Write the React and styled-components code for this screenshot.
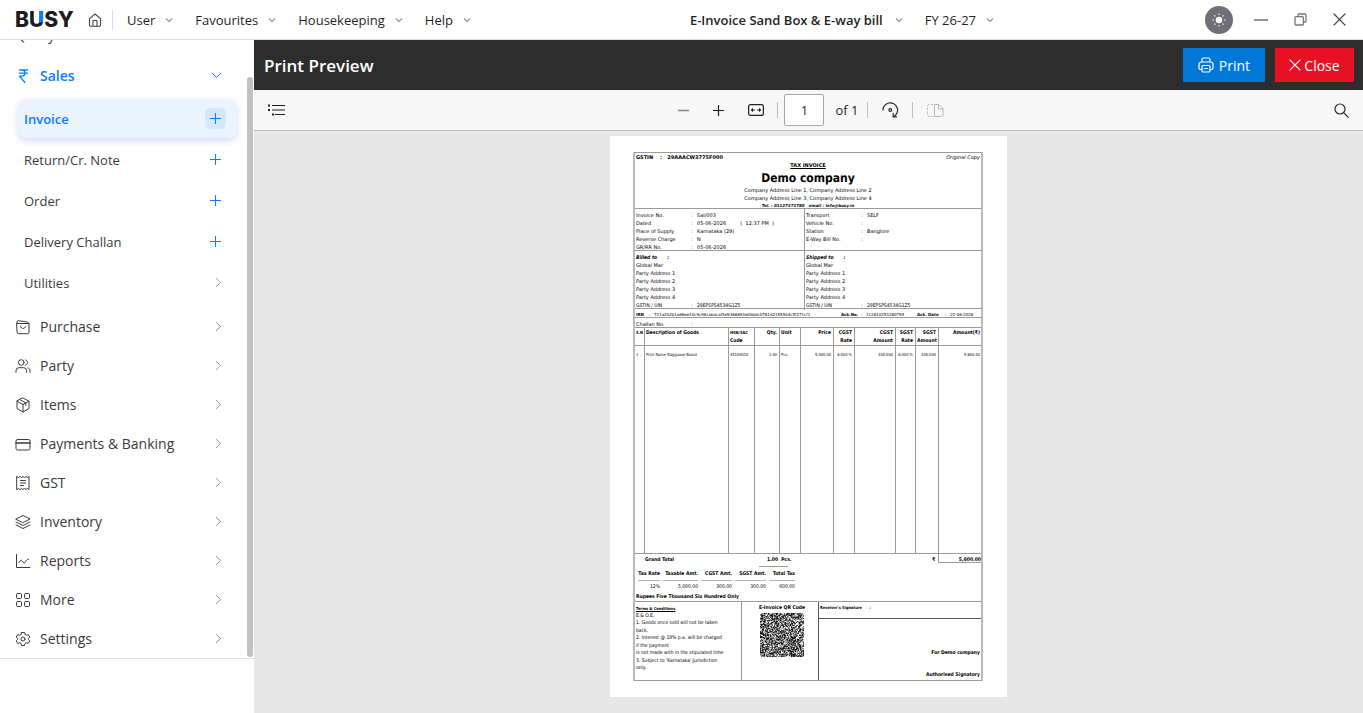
import React from 'react';
import styled, { createGlobalStyle, css } from 'styled-components';

const GlobalStyle = createGlobalStyle`
  * {
    box-sizing: border-box;
  }

  body {
    margin: 0;
    font-family: "Open Sans", "Noto Sans", sans-serif;
    color: #1f1f1f;
    background: #ffffff;
  }

  button, input {
    font-family: inherit;
    color: inherit;
  }
`;

const Page = styled.div`
  min-height: 100vh;
  display: flex;
  flex-direction: column;
`;

const plainButton = css`
  display: flex;
  align-items: center;
  padding: 0;
  border: 0;
  background: none;
  cursor: pointer;
`;

/* Top bar */

const TopBar = styled.header`
  height: 40px;
  flex: none;
  display: flex;
  align-items: center;
  justify-content: space-between;
  padding: 0 17px 0 15px;
  border-bottom: 1px solid #dddddd;
`;

const TopGroup = styled.div`
  display: flex;
  align-items: center;
`;

const Logo = styled.a`
  width: 60px;
  margin-right: 13px;
  font-family: Inter, sans-serif;
  font-size: 21px;
  font-weight: 800;
  line-height: 24px;
  color: #1c1c1e;
  text-decoration: none;
`;

const LogoAccent = styled.span`
  color: transparent;
  background: linear-gradient(#0a7cff, #0a7cff) right top / 42% 62% no-repeat, #1c1c1e;
  background-clip: text;
  -webkit-background-clip: text;
`;

const HomeButton = styled.button`
  ${plainButton}
  padding-right: 10px;
  margin-right: 14px;
  height: 20px;
  border-right: 1px solid #dcdce0;
`;

const Menu = styled.nav`
  display: flex;
  gap: 22px;
`;

const MenuButton = styled.button`
  ${plainButton}
  gap: ${({ $strong }) => ($strong ? '12px' : '10px')};
  font-size: 13px;
  line-height: 20px;
  font-weight: ${({ $strong }) => ($strong ? 600 : 400)};
  white-space: nowrap;
`;

const CompanyMenu = styled(Menu)`
  padding-left: 8px;
`;

const WindowControls = styled.div`
  display: flex;
  align-items: center;
  gap: 26px;
`;

const IconButton = styled.button`
  ${plainButton}
`;

const ThemeButton = styled.button`
  ${plainButton}
  justify-content: center;
  width: 28px;
  height: 28px;
  border-radius: 14px;
  background: #6f6f77;
  margin-right: -5px;
`;

/* Sidebar */

const Body = styled.div`
  flex: 1;
  display: flex;
  min-height: 0;
`;

const Sidebar = styled.aside`
  width: 254px;
  flex: none;
  display: flex;
  flex-direction: column;
`;

const SidebarScroll = styled.div`
  flex: 1 1 0;
  min-height: 0;
  display: flex;
  border-bottom: 1px solid #e0e0e0;
`;

const SidebarList = styled.div`
  flex: 1;
  display: flex;
  flex-direction: column;
  justify-content: flex-end;
  overflow: hidden;
`;

const ScrollTrack = styled.div`
  width: 7px;
  display: flex;
  flex-direction: column;
  justify-content: flex-end;
  padding: 0 1px 1px 0;
`;

const ScrollThumb = styled.div`
  height: 94%;
  border-radius: 3px;
  background: #c1c1c1;
`;

const SidebarFooter = styled.div`
  height: 54px;
  flex: none;
`;

const NavItem = styled.a`
  flex: none;
  display: flex;
  align-items: center;
  gap: 9px;
  height: 39px;
  padding: 0 25px 0 15px;
  font-size: 14px;
  font-weight: ${({ $active }) => ($active ? 600 : 400)};
  color: ${({ $active }) => ($active ? '#0a7cff' : '#3a3a3a')};
  text-decoration: none;
`;

const SearchItem = styled(NavItem)`
  padding-bottom: 5px;
`;

const NavLabel = styled.span`
  flex: 1;
  white-space: nowrap;
`;

const SubList = styled.div`
  flex: none;
  padding: 4px 10px 3px 18px;
`;

const SubRow = styled.div`
  display: flex;
  align-items: center;
  height: 39px;
  margin-bottom: 2px;
  padding: 0 11px 0 6px;
  border-radius: 8px;

  ${({ $selected }) => $selected && css`
    background: #ebf3ff;
    box-shadow: 0 3px 6px #d3dafc;
  `}
`;

const SubLink = styled.a`
  flex: 1;
  font-size: 13px;
  font-weight: ${({ $selected }) => ($selected ? 600 : 400)};
  color: ${({ $selected }) => ($selected ? '#0a7cff' : '#3a3a3a')};
  text-decoration: none;
`;

const AddButton = styled.button`
  ${plainButton}
  justify-content: center;
  width: 21px;
  height: 21px;
  border-radius: 5px;
  background: ${({ $selected }) => ($selected ? '#d3e7fd' : 'none')};
`;

const SubChevron = styled.span`
  display: flex;
  padding-right: 4px;
`;

/* Preview pane */

const Preview = styled.main`
  flex: 1;
  min-width: 0;
  display: flex;
  flex-direction: column;
  background: #e6e6e6;
`;

const PreviewHeader = styled.div`
  display: flex;
  align-items: center;
  gap: 10px;
  height: 50px;
  padding: 0 9px 0 10px;
  background: #2d2d2d;
  color: #ffffff;
`;

const PreviewTitle = styled.h1`
  flex: 1;
  margin: 0;
  font-size: 17px;
  font-weight: 600;
`;

const ActionButton = styled.button`
  ${plainButton}
  justify-content: center;
  gap: ${({ $danger }) => ($danger ? '3px' : '5px')};
  width: ${({ $danger }) => ($danger ? '79px' : '82px')};
  height: 34px;
  font-size: 14px;
  background: ${({ $danger }) => ($danger ? '#e81123' : '#0078d7')};
`;

const Toolbar = styled.div`
  display: grid;
  grid-template-columns: 1fr auto 1fr;
  align-items: center;
  height: 41px;
  padding: 0 14px;
  background: #f7f7f7;
  border-bottom: 1px solid #bdbdbd;
`;

const ToolGroup = styled.div`
  display: flex;
  align-items: center;
  justify-content: ${({ $end }) => ($end ? 'flex-end' : 'flex-start')};
`;

const PageTools = styled(ToolGroup)`
  padding-left: 5px;
`;

const ZoomTools = styled(ToolGroup)`
  gap: 24px;
`;

const Separator = styled.span`
  width: 1px;
  height: 16px;
  margin: 0 ${({ $wide }) => ($wide ? '14px' : '6px')} 0 ${({ $tight }) => ($tight ? '8px' : '13px')};
  background: #bdbdbd;
`;

const PageInput = styled.input`
  width: 40px;
  height: 32px;
  padding: 0;
  border: 1px solid #a8a8a8;
  border-radius: 2px;
  background: #ffffff;
  font-size: 13px;
  text-align: center;
`;

const PageCount = styled.label`
  margin-left: 11px;
  font-size: 13px;
`;

const Canvas = styled.div`
  flex: 1;
  display: flex;
  justify-content: center;
  align-items: flex-start;
  padding: 5px 0 16px;
`;

/* Invoice sheet */

const LINE = '#9a9a9a';
const WIDE_FONT = '"DejaVu Sans", sans-serif';

const Sheet = styled.article`
  width: 397px;
  padding: 16px 24px 16px 23px;
  background: #ffffff;
  color: #000000;
  font-family: "DejaVu Sans Condensed", "DejaVu Sans", sans-serif;
  font-size: 5px;
  line-height: 8px;
  text-rendering: geometricPrecision;
`;

const Frame = styled.div`
  border: 1px solid ${LINE};
  border-left: 2px solid #bababa;
  border-right: 2px solid #bababa;
`;

const Head = styled.div`
  height: 56px;
  padding-top: 1px;
  border-bottom: 1px solid ${LINE};
  font-family: ${WIDE_FONT};
  text-align: center;
`;

const HeadRow = styled.div`
  display: flex;
  justify-content: space-between;
  padding: 0 1px;
`;

const Bold = styled.strong`
  font-weight: 700;
  white-space: pre;
`;

const Underlined = styled(Bold)`
  text-decoration: underline;
`;

const CompanyName = styled.h2`
  margin: 0;
  font-family: "DejaVu Sans Condensed", sans-serif;
  font-size: 12px;
  line-height: 17px;
`;

const Contact = styled.div`
  font-size: 4px;
  font-weight: 700;
  font-style: italic;
  line-height: 6px;
  white-space: pre;
`;

const Halves = styled.div`
  display: grid;
  grid-template-columns: 169px 1fr;
  height: ${({ $tall }) => ($tall ? '58px' : '42px')};
  border-bottom: 1px solid ${LINE};
  font-family: ${WIDE_FONT};
`;

const Half = styled.div`
  padding: 3px 2px 0 1px;

  & + & {
    border-left: 1px solid ${LINE};
  }
`;

const Field = styled.div`
  display: grid;
  grid-template-columns: 55px 6px 1fr;
  white-space: pre;
`;

const PartyTitle = styled.div`
  display: flex;
  gap: 10px;
  font-family: "DejaVu Sans Condensed", sans-serif;
  font-weight: 700;
  font-style: italic;
`;

const TaxNumber = styled(Field)`
  font-family: "DejaVu Sans Condensed", sans-serif;
`;

const IrnRow = styled.div`
  display: grid;
  grid-template-columns: 13px 5px 187px 20px 5px 51px 28px 1fr;
  height: 9px;
  padding: 2px 1px 0;
  border-bottom: 1px solid ${LINE};
  font-family: ${WIDE_FONT};
  font-size: 4px;
  line-height: 7px;
  white-space: pre;
`;

const ChallanRow = styled.div`
  height: 9px;
  padding: 3px 1px 0;
  font-family: ${WIDE_FONT};
`;

const Goods = styled.table`
  width: 100%;
  table-layout: fixed;
  border-collapse: separate;
  border-spacing: 0;
  border-top: 1px solid ${LINE};
  border-bottom: 1px solid ${LINE};
`;

const cell = css`
  padding: 1px 2px 0 1px;
  vertical-align: top;
  text-align: ${({ $right }) => ($right ? 'right' : 'left')};
  white-space: pre;
  border-right: 1px solid ${LINE};

  &:last-child {
    border-right: 0;
    padding-right: 1px;
  }
`;

const GoodsHead = styled.th`
  ${cell}
  height: 18px;
  font-size: 5px;
  border-bottom: 1px solid ${LINE};
`;

const SmallHead = styled.div`
  font-size: 4px;
`;

const GoodsCell = styled.td`
  ${cell}
  height: 207px;
  padding-top: 5px;
  font-size: 4px;
`;

const GrandTotal = styled.div`
  display: grid;
  grid-template-columns: 10px 122px 27px 1fr 43px;
  grid-template-rows: 9px;
  font-weight: 700;
  line-height: 12px;
  white-space: pre;
`;

const GrandAmount = styled.div`
  text-align: right;
  border-left: 1px solid ${LINE};
  border-bottom: 1px solid ${LINE};
`;

const Dash = styled.div`
  width: 29px;
  height: 4px;
  margin-left: 124px;
  border-bottom: 1px solid ${LINE};
`;

const TaxTable = styled.table`
  border-collapse: separate;
  border-spacing: 3px 0;
  margin-top: 3px;

  th, td {
    padding: 0;
    text-align: right;
    line-height: 8px;
    white-space: nowrap;
  }

  th {
    height: 11px;
    vertical-align: top;
    border-bottom: 1px solid #b5b5b5;
  }

  td {
    height: 11px;
    vertical-align: middle;
  }
`;

const Words = styled.div`
  padding: 1px 1px 0;
  border-bottom: 1px solid ${LINE};
  font-weight: 700;
`;

const Foot = styled.div`
  display: grid;
  grid-template-columns: 106px 78px 1fr;
  height: 78px;
`;

const Terms = styled.div`
  display: flex;
  flex-direction: column;
  justify-content: space-between;
  padding: 3px 1px 8px;
  line-height: 7px;
  white-space: nowrap;
`;

const TermsTitle = styled(Underlined)`
  font-size: 4px;
`;

const QrBox = styled.div`
  display: flex;
  flex-direction: column;
  align-items: center;
  gap: 1px;
  padding: 2px 0 0 4px;
  border-left: 1px solid ${LINE};
  border-right: 1px solid #555555;
`;

const Signature = styled.div`
  display: flex;
  flex-direction: column;
  font-weight: 700;
`;

const Receiver = styled.div`
  height: 17px;
  padding: 2px 1px 0;
  border-bottom: 1px solid #555555;
  font-size: 4px;
  white-space: pre;
`;

const SignBlock = styled.div`
  flex: 1;
  display: flex;
  flex-direction: column;
  justify-content: flex-end;
  gap: 14px;
  padding: 0 1px 1px;
  text-align: right;
`;

/* Icons */

const Svg = ({ size = 16, box = 16, stroke = 1, children, ...rest }) => (
  <svg
    width={size}
    height={size}
    viewBox={`0 0 ${box} ${box}`}
    fill="none"
    stroke="currentColor"
    strokeWidth={stroke}
    strokeLinecap="round"
    strokeLinejoin="round"
    aria-hidden="true"
    {...rest}
  >
    {children}
  </svg>
);

const Caret = () => (
  <svg width="8" height="6" viewBox="0 0 8 6" fill="none" stroke="#9a9aa2" strokeWidth="1.3" aria-hidden="true">
    <path d="M1 1.5l3 3 3-3" />
  </svg>
);

const ChevronRight = () => (
  <svg width="7" height="11" viewBox="0 0 7 11" fill="none" stroke="#9c9c9c" aria-hidden="true">
    <path d="M1 1l4.5 4.5L1 10" />
  </svg>
);

const ChevronDown = () => (
  <svg width="11" height="7" viewBox="0 0 11 7" fill="none" stroke="#0a7cff" aria-hidden="true">
    <path d="M1 1l4.5 4.5L10 1" />
  </svg>
);

const PlusIcon = () => (
  <svg width="11" height="11" viewBox="0 0 11 11" fill="none" stroke="#0a7cff" aria-hidden="true">
    <path d="M5.5 0v11M0 5.5h11" />
  </svg>
);

const HomeIcon = () => (
  <Svg size={14} box={14} stroke={1.1} color="#444">
    <path d="M1.5 5.6L7 1l5.500 4.600V12a1.200 1.200 0 0 1-1.200 1.200H2.700A1.200 1.200 0 0 1 1.500 12z" />
    <path d="M5 13V7.500h4V13" />
  </Svg>
);

const SunIcon = () => (
  <svg width="16" height="16" viewBox="0 0 16 16" fill="#fff" stroke="#fff" strokeWidth="1.2" aria-hidden="true">
    <circle cx="8" cy="8" r="2.600" />
    <path d="M8 1.500v1.500M8 13v1.500M1.500 8H3M13 8h1.500M3.400 3.400l1 1M11.600 11.600l1 1M3.400 12.600l1-1M11.600 4.400l1-1" />
  </svg>
);

const MinimizeIcon = () => (
  <svg width="14" height="14" viewBox="0 0 14 14" stroke="#707070" strokeWidth="1.500" aria-hidden="true">
    <path d="M0 7h14" />
  </svg>
);

const RestoreIcon = () => (
  <Svg size={13} box={13} stroke={1.3} color="#70757f">
    <rect x="1" y="3.600" width="8.400" height="8.400" rx="1" />
    <path d="M4 3.400V2a1 1 0 0 1 1-1h6a1 1 0 0 1 1 1v6a1 1 0 0 1-1 1H9.600" />
  </Svg>
);

const CrossIcon = ({ size, color = '#3a3a3a' }) => (
  <svg width={size} height={size} viewBox="0 0 12 12" stroke={color} strokeWidth="1.200" aria-hidden="true">
    <path d="M.6.6l10.800 10.800M11.400.6L.6 11.400" />
  </svg>
);

const ICONS = {
  sales: (
    <path d="M4.500 2h8M4.500 5.200h8M4.500 2h2.200c4.400 0 4.400 6.200 0 6.200H4.500l5.300 6" strokeWidth="1.300" />
  ),
  purchase: (
    <>
      <path d="M2 4.500h12v8.700a1.500 1.500 0 0 1-1.500 1.500h-9A1.500 1.500 0 0 1 2 13.200z" />
      <path d="M2 4.300V3a1.300 1.300 0 0 1 1.300-1.300L12.500 3 14 4.500M5.500 7.500c.6 2.700 4.400 2.700 5 0" />
    </>
  ),
  party: (
    <>
      <circle cx="6.300" cy="4.500" r="2.800" />
      <path d="M1 14.300v-1.600a3 3 0 0 1 3-3h4.600a3 3 0 0 1 3 3v1.600M10.600 1.900c2.700.6 2.700 4.600 0 5.200M13 9.900c1.300.4 2 1.500 2 2.800v1.600" />
    </>
  ),
  items: (
    <>
      <path d="M8 1l6 3.200v7.300L8 15l-6-3.500V4.200z" />
      <path d="M2.200 4.300L8 7.500l5.800-3.200M8 7.500V15M4.900 2.700l5.900 3.200v2.500" />
    </>
  ),
  payments: (
    <>
      <rect x="1" y="3.500" width="14" height="10.500" rx="1.500" />
      <path d="M1 7h14" strokeWidth="1.600" />
    </>
  ),
  gst: (
    <path d="M2 1.500l1.500 1 1.500-1 1.500 1 1.500-1 1.500 1 1.500-1 1.500 1 1.500-1v13l-1.500-1-1.500 1-1.500-1-1.500 1-1.500-1-1.500 1-1.500-1-1.500 1zM5.500 5.500h5M5.500 8h5M5.500 10.500h3" />
  ),
  inventory: (
    <path d="M1 5l7-3.500L15 5 8 8.500zM1 8l7 3.500L15 8M1 11l7 3.500 7-3.500" />
  ),
  reports: (
    <path d="M1.500 1.500v13H15M4 9.500c1.500-2.800 2.500-2.800 3.700-.9s2 1.700 2.800.2S12.500 5.800 13.500 6" />
  ),
  more: (
    <>
      <rect x="1.500" y="1.500" width="5" height="5" rx="1" />
      <rect x="9.500" y="1.500" width="5" height="5" rx="1" />
      <rect x="1.500" y="9.500" width="5" height="5" rx="1" />
      <rect x="9.500" y="9.500" width="5" height="5" rx="1" />
    </>
  ),
  settings: (
    <>
      <circle cx="8" cy="8" r="2" />
      <path d="M6.500 1.500h3l.5 2 1.300.7 2-.6 1.500 2.500L13.400 7.400v1.200l1.400 1.300-1.500 2.500-2-.6-1.300.7-.5 2h-3L6 12.500l-1.300-.7-2 .6L1.200 9.900l1.400-1.300V7.400L1.200 6.100l1.500-2.500 2 .6L6 3.500z" />
    </>
  ),
};

const ListIcon = () => (
  <svg width="17" height="12" viewBox="0 0 17 12" stroke="#1f1f1f" aria-hidden="true">
    <path d="M4 1.500h13M4 6h13M7 10.500h10" strokeWidth="1.200" />
    <path d="M0 1.500h2M0 6h2M4 10.500h2" strokeWidth="1.800" />
  </svg>
);

const ZoomOutIcon = () => (
  <svg width="11" height="11" viewBox="0 0 11 11" stroke="#8a8a8a" aria-hidden="true">
    <path d="M0 5.500h11" strokeWidth="1.600" />
  </svg>
);

const ZoomInIcon = () => (
  <svg width="11" height="11" viewBox="0 0 11 11" stroke="#1f1f1f" aria-hidden="true">
    <path d="M0 5.500h11M5.500 0v11" strokeWidth="1.200" />
  </svg>
);

const FitWidthIcon = () => (
  <svg width="16" height="12" viewBox="0 0 16 12" fill="none" stroke="#1f1f1f" aria-hidden="true">
    <rect x=".6" y=".6" width="14.800" height="10.800" rx="2" strokeWidth="1.200" />
    <path d="M3.500 6h3.500M9 6h3.500" />
    <path d="M5 3.800L2.800 6 5 8.200zM11 3.800L13.200 6 11 8.200z" fill="#1f1f1f" stroke="none" />
  </svg>
);

const RotateIcon = () => (
  <svg width="17" height="16" viewBox="0 0 17 16" fill="none" stroke="#2b2b2b" strokeWidth="1.200" aria-hidden="true">
    <path d="M1 8.500a7.300 7.300 0 1 1 11 5.900M15 14.800h-3.800v-3.800" />
    <circle cx="8.300" cy="8" r="1.400" />
  </svg>
);

const PageViewIcon = () => (
  <svg width="17" height="13" viewBox="0 0 17 13" fill="none" stroke="#b8b8b8" aria-hidden="true">
    <path d="M7.500.5h4.500l4 4v6.500a1.500 1.500 0 0 1-1.500 1.500h-7zM11.500.5v4.500H16" />
    <path d="M6.500.5H2A1.500 1.500 0 0 0 .5 2v9A1.500 1.500 0 0 0 2 12.500h4.500" strokeDasharray="2.500 1.500" />
  </svg>
);

const SearchIcon = () => (
  <Svg size={15} box={15} stroke={1.2} color="#2b2b2b">
    <circle cx="6" cy="6" r="5" />
    <path d="M9.700 9.700l4.600 4.600" />
  </Svg>
);

const PrintIcon = () => (
  <Svg size={16} stroke={1.2}>
    <path d="M4 5V2.500A1.500 1.500 0 0 1 5.500 1h5A1.500 1.500 0 0 1 12 2.500V5M4 12.500H2.500A1.500 1.500 0 0 1 1 11V7.500A2.500 2.500 0 0 1 3.500 5h9A2.500 2.500 0 0 1 15 7.500V11a1.500 1.500 0 0 1-1.500 1.500H12" />
    <rect x="4" y="8.500" width="8" height="6.500" rx="1" />
    <path d="M6.500 11.500h3" />
  </Svg>
);

/* Invoice data */

const QR_SIZE = 61;

const buildQrPath = () => {
  let seed = 7919;
  let path = '';
  for (let y = 0; y < QR_SIZE; y += 1) {
    for (let x = 0; x < QR_SIZE; x += 1) {
      seed = (seed * 1103515245 + 12345) % 2147483648;
      if (seed / 2147483648 > 0.42) {
        path += `M${x} ${y}h1v1h-1z`;
      }
    }
  }
  return path;
};

const QR_PATH = buildQrPath();

const NAV_ITEMS = [
  ['purchase', 'Purchase'],
  ['party', 'Party'],
  ['items', 'Items'],
  ['payments', 'Payments & Banking'],
  ['gst', 'GST'],
  ['inventory', 'Inventory'],
  ['reports', 'Reports'],
  ['more', 'More'],
  ['settings', 'Settings'],
];

const SALES_ITEMS = ['Invoice', 'Return/Cr. Note', 'Order', 'Delivery Challan', 'Utilities'];

const LEFT_FIELDS = [
  ['Invoice No.', 'Sal/003'],
  ['Dated', '05-06-2026         (  12:37 PM  )'],
  ['Place of Supply', 'Karnataka (29)'],
  ['Reverse Charge', 'N'],
  ['GR/RR No.', '05-06-2026'],
];

const RIGHT_FIELDS = [
  ['Transport', 'SELF'],
  ['Vehicle No.', ''],
  ['Station', 'Banglore'],
  ['E-Way Bill No.', ''],
];

const PARTY_LINES = ['Global Mar', 'Party Address 1', 'Party Address 2', 'Party Address 3', 'Party Address 4'];

const GOODS_COLUMNS = [
  { width: 10, title: 'S.N', value: '1  .', small: true },
  { width: 84, title: 'Description of Goods', value: 'Print Name Bagguase Board' },
  { width: 26, title: 'HSN/SAC', unit: 'Code', value: '44109010', small: true },
  { width: 25, title: 'Qty.', value: '1.00', right: true },
  { width: 21, title: 'Unit', value: 'Pcs.' },
  { width: 33, title: 'Price', value: '5,000.00', right: true },
  { width: 21, title: 'CGST', unit: 'Rate', value: '6.000 %', right: true },
  { width: 41, title: 'CGST', unit: 'Amount', value: '300.000', right: true },
  { width: 20, title: 'SGST', unit: 'Rate', value: '6.000 %', right: true },
  { width: 23, title: 'SGST', unit: 'Amount', value: '300.000', right: true },
  { title: 'Amount(₹)', value: '5,600.00', right: true },
];

const TAX_COLUMNS = [
  [22, 'Tax Rate', '12%'],
  [35, 'Taxable Amt.', '5,000.00'],
  [31, 'CGST Amt.', '300.00'],
  [31, 'SGST Amt.', '300.00'],
  [26, 'Total Tax', '600.00'],
];

const TERMS = [
  'E.& O.E.',
  '1. Goods once sold will not be taken',
  'back.',
  '2. Interest @ 18% p.a. will be charged',
  'if the payment',
  'is not made with in the stipulated time.',
  "3. Subject to 'Karnataka' Jurisdiction",
  'only.',
];

const columnKey = ({ title, unit }) => `${title} ${unit || ''}`;

const FieldRow = ({ label, value, as: Row = Field }) => (
  <Row>
    <span>{label}</span>
    <span>:</span>
    <span>{value}</span>
  </Row>
);

const Party = ({ title }) => (
  <Half>
    <PartyTitle>
      <span>{title}</span>
      <span>:</span>
    </PartyTitle>
    {PARTY_LINES.map((line) => <div key={line}>{line}</div>)}
    <FieldRow as={TaxNumber} label="GSTIN / UIN" value="29EPSPS4534G1Z5" />
  </Half>
);

const Invoice = () => (
  <Sheet>
    <Frame>
      <Head>
        <HeadRow>
          <Bold>{'GSTIN    :   29AAACW3775F000'}</Bold>
          <i>Original Copy</i>
        </HeadRow>
        <div><Underlined>TAX INVOICE</Underlined></div>
        <CompanyName>Demo company</CompanyName>
        <div>Company Address Line 1, Company Address Line 2</div>
        <div>Company Address Line 3, Company Address Line 4</div>
        <Contact>{'Tel. : 01127371780   email : info@busy.in'}</Contact>
      </Head>

      <Halves>
        <Half>
          {LEFT_FIELDS.map(([label, value]) => <FieldRow key={label} label={label} value={value} />)}
        </Half>
        <Half>
          {RIGHT_FIELDS.map(([label, value]) => <FieldRow key={label} label={label} value={value} />)}
        </Half>
      </Halves>

      <Halves $tall>
        <Party title="Billed to" />
        <Party title="Shipped to" />
      </Halves>

      <IrnRow>
        <Bold>IRN</Bold>
        <span>:</span>
        <span>721a2b2b1a66ee10c9c98cabacaf4e9366893e0bbdc0781d21555b4c5f271cf1</span>
        <Bold>Ack.No.</Bold>
        <span>:</span>
        <span>112610253280795</span>
        <Bold>Ack. Date</Bold>
        <span>{':   22-06-2026'}</span>
      </IrnRow>
      <ChallanRow>
        <FieldRow label="Challan No." value="" />
      </ChallanRow>

      <Goods>
        <colgroup>
          {GOODS_COLUMNS.map((column) => <col key={columnKey(column)} width={column.width} />)}
        </colgroup>
        <thead>
          <tr>
            {GOODS_COLUMNS.map((column) => (
              <GoodsHead key={columnKey(column)} $right={column.right}>
                {column.small ? <SmallHead>{column.title}</SmallHead> : column.title}
                {column.unit ? <div>{column.unit}</div> : null}
              </GoodsHead>
            ))}
          </tr>
        </thead>
        <tbody>
          <tr>
            {GOODS_COLUMNS.map((column) => (
              <GoodsCell key={columnKey(column)} $right={column.right}>{column.value}</GoodsCell>
            ))}
          </tr>
        </tbody>
      </Goods>

      <GrandTotal>
        <span />
        <span>Grand Total</span>
        <span>{'1.00  Pcs.'}</span>
        <HeadRow>
          <span />
          <span>₹ </span>
        </HeadRow>
        <GrandAmount>5,600.00</GrandAmount>
      </GrandTotal>
      <Dash />

      <TaxTable>
        <thead>
          <tr>
            {TAX_COLUMNS.map(([width, title]) => <th key={title} width={width}>{title}</th>)}
          </tr>
        </thead>
        <tbody>
          <tr>
            {TAX_COLUMNS.map(([, title, value]) => <td key={title}>{value}</td>)}
          </tr>
        </tbody>
      </TaxTable>
      <Words>Rupees Five Thousand Six Hundred Only</Words>

      <Foot>
        <Terms>
          <TermsTitle>{'Terms & Conditions'}</TermsTitle>
          {TERMS.map((line) => <div key={line}>{line}</div>)}
        </Terms>
        <QrBox>
          <Bold>E-Invoice QR Code</Bold>
          <svg width="44" height="44" viewBox={`0 0 ${QR_SIZE} ${QR_SIZE}`} role="img" aria-label="E-Invoice QR Code">
            <path d={QR_PATH} fill="#111111" />
          </svg>
        </QrBox>
        <Signature>
          <Receiver>{"Receiver's Signature      :"}</Receiver>
          <SignBlock>
            <div>For Demo company</div>
            <div>Authorised Signatory</div>
          </SignBlock>
        </Signature>
      </Foot>
    </Frame>
  </Sheet>
);

const SalesRow = ({ label }) => {
  const selected = label === 'Invoice';

  return (
    <SubRow $selected={selected}>
      <SubLink href="#" $selected={selected}>{label}</SubLink>
      {
        label === 'Utilities' ? (
          <SubChevron><ChevronRight /></SubChevron>
        ) : (
          <AddButton type="button" aria-label={`Add ${label}`} $selected={selected}>
            <PlusIcon />
          </AddButton>
        )
      }
    </SubRow>
  );
};

const App = () => (
  <Page>
    <GlobalStyle />

    <TopBar>
      <TopGroup>
        <Logo href="#">
          B
          <LogoAccent>U</LogoAccent>
          SY
        </Logo>
        <HomeButton type="button" aria-label="Home"><HomeIcon /></HomeButton>
        <Menu>
          {['User', 'Favourites', 'Housekeeping', 'Help'].map((label) => (
            <MenuButton key={label} type="button">
              {label}
              <Caret />
            </MenuButton>
          ))}
        </Menu>
      </TopGroup>

      <CompanyMenu>
        <MenuButton type="button" $strong>
          {'E-Invoice Sand Box & E-way bill'}
          <Caret />
        </MenuButton>
        <MenuButton type="button">
          FY 26-27
          <Caret />
        </MenuButton>
      </CompanyMenu>

      <WindowControls>
        <ThemeButton type="button" aria-label="Theme"><SunIcon /></ThemeButton>
        <IconButton type="button" aria-label="Minimize"><MinimizeIcon /></IconButton>
        <IconButton type="button" aria-label="Restore"><RestoreIcon /></IconButton>
        <IconButton type="button" aria-label="Close window"><CrossIcon size={13} /></IconButton>
      </WindowControls>
    </TopBar>

    <Body>
      <Sidebar>
        <SidebarScroll>
          <SidebarList>
            <SearchItem href="#">Query</SearchItem>
            <NavItem href="#" $active>
              <Svg>{ICONS.sales}</Svg>
              <NavLabel>Sales</NavLabel>
              <ChevronDown />
            </NavItem>
            <SubList>
              {SALES_ITEMS.map((label) => <SalesRow key={label} label={label} />)}
            </SubList>
            {NAV_ITEMS.map(([icon, label]) => (
              <NavItem key={icon} href="#">
                <Svg>{ICONS[icon]}</Svg>
                <NavLabel>{label}</NavLabel>
                <ChevronRight />
              </NavItem>
            ))}
          </SidebarList>
          <ScrollTrack><ScrollThumb /></ScrollTrack>
        </SidebarScroll>
        <SidebarFooter />
      </Sidebar>

      <Preview>
        <PreviewHeader>
          <PreviewTitle>Print Preview</PreviewTitle>
          <ActionButton type="button">
            <PrintIcon />
            Print
          </ActionButton>
          <ActionButton type="button" $danger>
            <CrossIcon size={12} color="#ffffff" />
            Close
          </ActionButton>
        </PreviewHeader>

        <Toolbar>
          <ToolGroup>
            <IconButton type="button" aria-label="Contents"><ListIcon /></IconButton>
          </ToolGroup>
          <PageTools>
            <ZoomTools>
              <IconButton type="button" aria-label="Zoom out"><ZoomOutIcon /></IconButton>
              <IconButton type="button" aria-label="Zoom in"><ZoomInIcon /></IconButton>
              <IconButton type="button" aria-label="Fit to width"><FitWidthIcon /></IconButton>
            </ZoomTools>
            <Separator />
            <PageInput id="page" defaultValue="1" />
            <PageCount htmlFor="page">of 1</PageCount>
            <Separator $wide $tight />
            <IconButton type="button" aria-label="Rotate"><RotateIcon /></IconButton>
            <Separator $wide />
            <IconButton type="button" aria-label="Page view"><PageViewIcon /></IconButton>
          </PageTools>
          <ToolGroup $end>
            <IconButton type="button" aria-label="Search"><SearchIcon /></IconButton>
          </ToolGroup>
        </Toolbar>

        <Canvas>
          <Invoice />
        </Canvas>
      </Preview>
    </Body>
  </Page>
);

export default App;
